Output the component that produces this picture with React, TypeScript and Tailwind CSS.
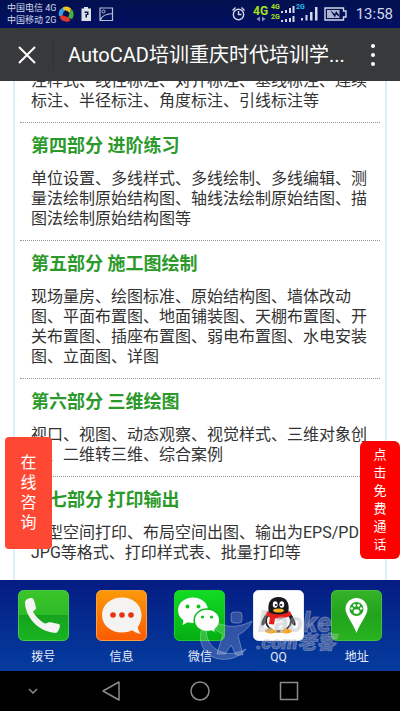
import React from 'react';

interface Section {
  title?: string;
  body: string;
}

interface DockApp {
  label: string;
  icon: React.FC;
}

const SECTIONS: Section[] = [
  { body: '注样式、线性标注、对齐标注、基线标注、连续标注、半径标注、角度标注、引线标注等' },
  {
    title: '第四部分 进阶练习',
    body: '单位设置、多线样式、多线绘制、多线编辑、测量法绘制原始结构图、轴线法绘制原始结图、描图法绘制原始结构图等',
  },
  {
    title: '第五部分 施工图绘制',
    body: '现场量房、绘图标准、原始结构图、墙体改动图、平面布置图、地面铺装图、天棚布置图、开关布置图、插座布置图、弱电布置图、水电安装图、立面图、详图',
  },
  {
    title: '第六部分 三维绘图',
    body: '视口、视图、动态观察、视觉样式、三维对象创建、二维转三维、综合案例',
  },
  {
    title: '第七部分 打印输出',
    body: '模型空间打印、布局空间出图、输出为EPS/PDF JPG等格式、打印样式表、批量打印等',
  },
];

const PhoneIcon: React.FC = () => (
  <svg viewBox="0 0 51 51" className="size-full">
    <defs>
      <linearGradient id="phone-bg" x1="0" y1="0" x2="0" y2="1">
        <stop offset="0" stopColor="#3cc52a" />
        <stop offset="0.49" stopColor="#2cba27" />
        <stop offset="0.5" stopColor="#17a31f" />
        <stop offset="1" stopColor="#18b520" />
      </linearGradient>
    </defs>
    <rect x="0.5" y="0.5" width="50" height="50" rx="5" fill="url(#phone-bg)" stroke="#45c94a" />
    <path
      d="M7 12c0-2 4-4.500 7-4 2 .5 3.500 7 4 10 .2 1.500-2 2.500-3 3.500C17 26 22 31 27 33.500c1.500.5 2.500-1.500 4.500-1.200 3 .4 8 1.200 10 2.200 1.500 1-1 7.500-3.500 8.500C32 43 22 39.500 16 33 10 26.500 7 19 7 12z"
      fill="#f4f4f4"
    />
  </svg>
);

const MessageIcon: React.FC = () => (
  <svg viewBox="0 0 51 51" className="size-full">
    <defs>
      <linearGradient id="message-bg" x1="0" y1="0" x2="0" y2="1">
        <stop offset="0" stopColor="#fb9a08" />
        <stop offset="1" stopColor="#fb5a02" />
      </linearGradient>
    </defs>
    <rect x="0.5" y="0.5" width="50" height="50" rx="5" fill="url(#message-bg)" stroke="#f9a03c" />
    <path
      d="M26 7.500C14.500 7.500 6 15 6 25S14.500 42.500 26 42.500c4 0 7-.7 10-2.200 2 1.500 5 3 9 3.700-2-2-3-4.500-3.200-7 2.400-3 3.700-7 3.700-12C45.500 15 37.500 7.500 26 7.500z"
      fill="#f5f3f1"
    />
    <circle cx="17" cy="25" r="2.800" fill="#e8330f" />
    <circle cx="26" cy="25" r="2.800" fill="#e8330f" />
    <circle cx="35" cy="25" r="2.800" fill="#e8330f" />
  </svg>
);

const WeChatIcon: React.FC = () => (
  <svg viewBox="0 0 51 51" className="size-full">
    <defs>
      <linearGradient id="wechat-bg" x1="0" y1="0" x2="0" y2="1">
        <stop offset="0" stopColor="#12dc22" />
        <stop offset="1" stopColor="#05ae12" />
      </linearGradient>
    </defs>
    <rect x="0.5" y="0.5" width="50" height="50" rx="5" fill="url(#wechat-bg)" stroke="#1ed02c" />
    <path
      d="M19 7.500C10.500 7.500 4 13 4 20.300c0 4 2 7.700 5.500 10.200L8.500 35l5.300-2.700c1.700.5 3.500.8 5.200.8 8.500 0 15-5.600 15-12.800S27.500 7.500 19 7.500z"
      fill="#fff"
    />
    <circle cx="13.500" cy="16.500" r="1.900" fill="#0cc41a" />
    <circle cx="24.500" cy="16.500" r="1.900" fill="#0cc41a" />
    <path
      d="M33 19c-7.200 0-12.800 5-12.800 11.300S25.800 41.600 33 41.600c1.600 0 3-.2 4.500-.6l4.500 2.500-1.200-4c3.200-2.200 5-5.400 5-9.200C45.800 24 40.200 19 33 19z"
      fill="#fff"
      stroke="#0bbd18"
      strokeWidth="1.500"
    />
    <circle cx="28.500" cy="27" r="1.600" fill="#0cc41a" />
    <circle cx="37.500" cy="27" r="1.600" fill="#0cc41a" />
  </svg>
);

const QQIcon: React.FC = () => (
  <svg viewBox="0 0 51 51" className="size-full">
    <rect x="0.500" y="0.500" width="50" height="50" rx="5" fill="#fefefe" stroke="#e4e9f2" />
    <path d="M14 23c-3 3-6 8-5.500 12 .3 2 3.500-1 5-3zM37 23c3 3 6 8 5.500 12-.3 2-3.500-1-5-3z" fill="#2a2b33" />
    <ellipse cx="25.500" cy="30" rx="13.500" ry="12.500" fill="#1f2026" />
    <ellipse cx="18" cy="41" rx="6" ry="2.600" fill="#f8a41a" />
    <ellipse cx="33" cy="41" rx="6" ry="2.600" fill="#f8a41a" />
    <ellipse cx="25.500" cy="31" rx="11.500" ry="9.500" fill="#f6f7f9" />
    <path d="M15.500 21C14.500 12 18 7 25.500 7s11 5 10 14c-1 3-5 4-10 4s-9-1-10-4z" fill="#17181d" />
    <ellipse cx="22.200" cy="14.500" rx="2.400" ry="3.300" fill="#fff" />
    <ellipse cx="28.800" cy="14.500" rx="2.400" ry="3.300" fill="#fff" />
    <circle cx="22.800" cy="15" r="1.100" fill="#111" />
    <circle cx="28.200" cy="15" r="1.100" fill="#111" />
    <ellipse cx="25.500" cy="20.500" rx="5.500" ry="2" fill="#fbae17" />
    <path d="M14 21c6 4.500 17 4.500 23 0l1.500 4c-5 3-11 4-16.500 3.500l-1 6-5-.5 1-6.500-4.500-2z" fill="#e31f1c" />
  </svg>
);

const PlaceIcon: React.FC = () => (
  <svg viewBox="0 0 51 51" className="size-full">
    <defs>
      <linearGradient id="place-bg" x1="0" y1="0" x2="0" y2="1">
        <stop offset="0" stopColor="#35b229" />
        <stop offset="0.5" stopColor="#22a31d" />
        <stop offset="1" stopColor="#28b320" />
      </linearGradient>
    </defs>
    <rect x="0.5" y="0.5" width="50" height="50" rx="5" fill="url(#place-bg)" stroke="#44bf3b" />
    <path d="M25.500 8C19 8 14.500 13 14.500 19c0 6 7 13 11 24 4-11 11-18 11-24 0-6-4.500-11-11-11z" fill="#fff" />
    <circle cx="25.500" cy="19" r="7" fill="#27a522" />
    <ellipse cx="25.500" cy="21.500" rx="3" ry="2.300" fill="#fff" />
    <circle cx="20.800" cy="18.500" r="1.300" fill="#fff" />
    <circle cx="23.500" cy="15.500" r="1.400" fill="#fff" />
    <circle cx="27.500" cy="15.500" r="1.400" fill="#fff" />
    <circle cx="30.200" cy="18.500" r="1.300" fill="#fff" />
  </svg>
);

const DOCK_APPS: DockApp[] = [
  { label: '拨号', icon: PhoneIcon },
  { label: '信息', icon: MessageIcon },
  { label: '微信', icon: WeChatIcon },
  { label: 'QQ', icon: QQIcon },
  { label: '地址', icon: PlaceIcon },
];

const StatusBar: React.FC = () => (
  <div className="flex h-7 shrink-0 items-center bg-linear-to-b from-[#02104f] to-[#030f63] px-[7px] text-[#d3d8e8]">
    <div className="w-[51px] whitespace-nowrap text-[9px] leading-[12px]">
      <p>中国电信 4G</p>
      <p>中国移动 2G</p>
    </div>
    <svg viewBox="0 0 56 16" className="h-4 w-14">
      <path d="M1 10A7.500 7.500 0 0 1 4 2l4 1-4 7z" fill="#3a9be0" />
      <path d="M5 1.200A7.500 7.500 0 0 1 13 2.500L12 7 5 3z" fill="#f2c21c" />
      <path d="M13.500 3A7.500 7.500 0 0 1 14 13l-4-1 2-6z" fill="#45ae3d" />
      <path d="M1.500 11A7.500 7.500 0 0 0 12.500 14.500L10 11 4 9z" fill="#e2372c" />
      <circle cx="8" cy="7.500" r="2.800" fill="#07134f" />
      <path d="M26 1h4v1.500h3V15H23.500V2.500H26z" fill="#dde1ea" />
      <path d="M26.500 5.500h4v3.500h-1.500v2.500h-1.500V8H29V7h-2.500z" fill="#07134f" />
      <path d="M42 2h12.500v12.500H42z M42.500 14c1-4 5-6 12-6.500" fill="none" stroke="#b9bfd4" strokeWidth="1.200" />
      <circle cx="45.500" cy="5.500" r="1.500" fill="none" stroke="#b9bfd4" />
    </svg>
    <svg viewBox="0 0 120 28" className="ml-auto h-7 w-30 font-bold">
      <g fill="none" stroke="#d3d8e8" strokeWidth="1.400">
        <circle cx="6.500" cy="14.500" r="5.200" />
        <path d="M6.500 11v3.500h3M.5 10.500l3-3M12.500 10.500l-3-3" />
      </g>
      <text x="21" y="15" fontSize="12" fill="#a4e01b">4G</text>
      <path d="M28 16.500L24.500 19l3.500 2.500zM30 16.500l3.500 2.500-3.500 2.500z" fill="#8790b5" />
      <text x="39" y="9" fontSize="7" fill="#a4e01b">4G</text>
      <text x="39" y="19" fontSize="7" fill="#a4e01b">2G</text>
      <path d="M49 11h2v2h-2zM53 10h2v3h-2zM57 8h2v5h-2zM60.500 6h2v7h-2zM49 20h2v2h-2zM53 19h2v3h-2zM57 18h2v4h-2zM60.500 16h2v6h-2z" fill="#d3d8e8" />
      <text x="64" y="9" fontSize="7" fill="#27bfe8">2G</text>
      <path d="M69 18h2v2.500h-2zM73.500 15h2v5.500h-2zM78 12h2.500v8.500H78zM83 7h2.500v13.500H83z" fill="#d3d8e8" />
      <path d="M93 8h18.500v3h2.500v6h-2.500v3H93z" fill="none" stroke="#d3d8e8" strokeWidth="1.400" />
      <path d="M95 10h12.500v8H95z" fill="#aeb5cc" />
      <path d="M98 10l5 4 1-3 5 6.500-5-3-1 3z" fill="#07134f" />
    </svg>
    <time className="ml-1 text-[15px] leading-5">13:58</time>
  </div>
);

const TitleBar: React.FC = () => (
  <header className="flex h-[53px] shrink-0 items-center bg-[#38393b] text-white">
    <button type="button" aria-label="关闭" className="flex h-7 w-[54px] items-center justify-center border-r border-[#303133]">
      <svg viewBox="0 0 18 18" className="size-[18px]">
        <path d="M1 1l16 16M17 1L1 17" stroke="#fff" strokeWidth="2" />
      </svg>
    </button>
    <h1 className="ml-3.5 flex-1 truncate text-xl leading-7">AutoCAD培训重庆时代培训学...</h1>
    <button type="button" aria-label="更多" className="flex w-[54px] justify-center">
      <svg viewBox="0 0 4 22" className="h-[22px] w-1">
        <circle cx="2" cy="2" r="2" fill="#fff" />
        <circle cx="2" cy="11" r="2" fill="#fff" />
        <circle cx="2" cy="20" r="2" fill="#fff" />
      </svg>
    </button>
  </header>
);

const CourseSection: React.FC<{ section: Section }> = ({ section }) => (
  <section className="border-b border-dotted border-[#999999] pb-[11px] pl-[11px] pr-2 last:border-b-0">
    {section.title && (
      <h2 className="py-[13px] text-lg leading-5 font-bold text-[#2b9a2b]">{section.title}</h2>
    )}
    <p className="text-base leading-5 text-[#333333]">{section.body}</p>
  </section>
);

const Watermark: React.FC = () => (
  <svg
    viewBox="0 0 150 52"
    className="pointer-events-none absolute right-[50px] bottom-[9px] h-[52px] w-[150px]"
    aria-hidden="true"
  >
    <g fill="#ffffff" fillOpacity="0.18" stroke="#ffffff" strokeOpacity="0.3" strokeWidth="1">
      <rect x="31" y="2" width="11" height="11" rx="3" />
      <path d="M8 12c6 1 13 2 20 4 9 1 16-1 24-5-3 7-8 11-14 14l5 20H36l-5-10-6 9h-8l6-20c-7-3-12-7-15-12z" />
      <path d="M8 12C-2 18-2 34 7 43c9 9 29 9 39-4-9 5-19 6-27 2C7 35 4 22 8 12z" />
    </g>
    <g fill="#a9adb8" fillOpacity="0.4" stroke="#ffffff" strokeOpacity="0.25" className="font-black italic">
      <text x="58" y="22" fontSize="31">
        L<tspan fontSize="27">aoke</tspan>
      </text>
      <text x="56" y="39" fontSize="19">.com老客</text>
    </g>
  </svg>
);

const Dock: React.FC = () => (
  <nav className="relative grid h-[91px] shrink-0 grid-cols-5 overflow-hidden bg-linear-to-b from-[#051b82] to-[#063c9f] px-1 pt-2.5">
    {DOCK_APPS.map(({ label, icon: Icon }) => (
      <button key={label} type="button" className="flex flex-col items-center gap-1.5">
        <span className="size-[51px]">
          <Icon />
        </span>
        <span className="text-xs leading-5 text-[#e8edf8]">{label}</span>
      </button>
    ))}
    <Watermark />
  </nav>
);

const SystemKeys: React.FC = () => (
  <div className="flex h-10 shrink-0 items-center bg-black px-[22px]">
    <button type="button" aria-label="收起" className="flex w-[22px] justify-center">
      <svg viewBox="0 0 10 6" className="h-1.5 w-2.5">
        <path d="M1 1l4 4 4-4" fill="none" stroke="#8a8a8a" strokeWidth="1.500" />
      </svg>
    </button>
    <div className="mr-11 ml-[22px] grid flex-1 grid-cols-3 justify-items-center">
      <button type="button" aria-label="返回">
        <svg viewBox="0 0 20 20" className="size-5">
          <path d="M18 1v18L2 10z" fill="none" stroke="#8a8a8a" strokeWidth="1.500" strokeLinejoin="round" />
        </svg>
      </button>
      <button type="button" aria-label="主页">
        <svg viewBox="0 0 20 20" className="size-5">
          <circle cx="10" cy="10" r="9" fill="none" stroke="#8a8a8a" strokeWidth="1.500" />
        </svg>
      </button>
      <button type="button" aria-label="最近任务">
        <svg viewBox="0 0 20 20" className="size-5">
          <rect x="1.500" y="1.500" width="17" height="17" fill="none" stroke="#8a8a8a" strokeWidth="1.500" />
        </svg>
      </button>
    </div>
  </div>
);

const App: React.FC = () => {
  return (
    <div className="flex h-screen flex-col overflow-hidden bg-white font-[Roboto,'Noto_Sans_CJK_SC',sans-serif]">
      <StatusBar />
      <TitleBar />
      <main className="relative flex-1 overflow-hidden">
        <article className="-mt-2.5 mx-[13px] min-h-full border-x-2 border-[#dceff4] px-[5px] pb-5">
          {SECTIONS.map((section, index) => (
            <CourseSection key={index} section={section} />
          ))}
        </article>
        <button
          type="button"
          className="absolute bottom-[31px] left-[5px] w-[47px] rounded bg-[#ff4834] px-[15px] py-4 text-base leading-5 text-white"
        >
          在线咨询
        </button>
        <button
          type="button"
          className="absolute right-0 bottom-[21px] w-10 rounded-md bg-[#fe0000] px-[13px] py-[5px] text-[13px] leading-[18px] text-white"
        >
          点击免费通话
        </button>
      </main>
      <Dock />
      <SystemKeys />
    </div>
  );
};

export default App;
